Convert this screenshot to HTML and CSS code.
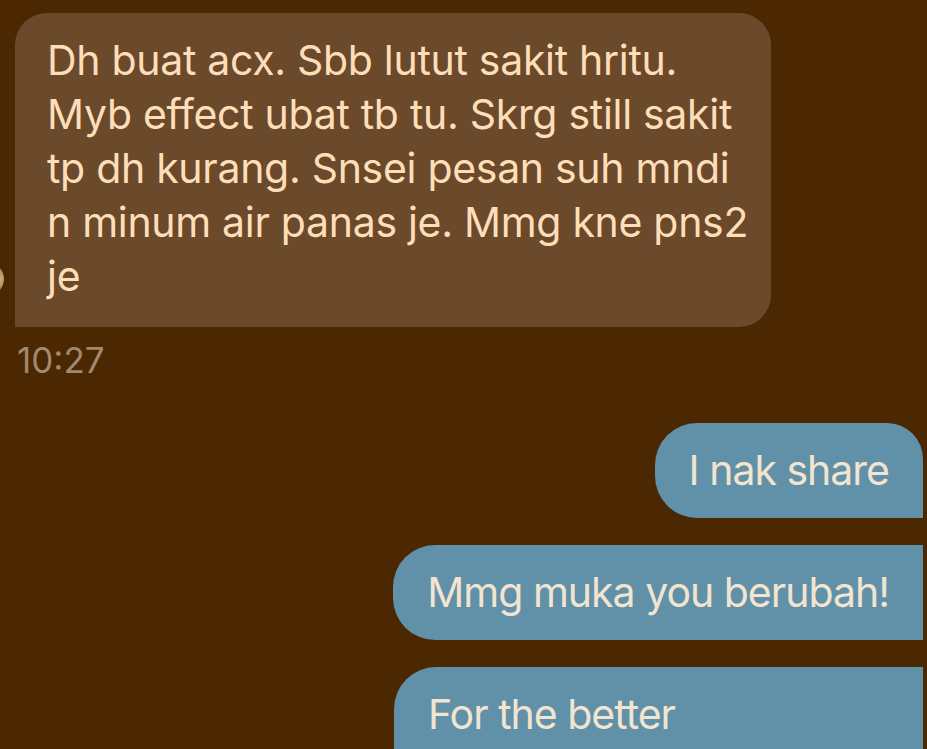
FILE: index.html
```html
<!DOCTYPE html>
<html>
<head>
<meta charset="utf-8">
<link rel="stylesheet" href="styles.css">
</head>
<body>
<div class="chat">
  <div class="group received">
    <div class="row">
      <div class="avatar"></div>
      <div class="bubble in">Dh buat acx. Sbb lutut sakit hritu. Myb effect ubat tb tu. Skrg still sakit tp dh kurang. Snsei pesan suh mndi n minum air panas je. Mmg kne pns2 je</div>
    </div>
    <div class="time">10:27</div>
  </div>
  <div class="group sent">
    <div class="bubble out first">I nak share</div>
    <div class="bubble out middle">Mmg muka you berubah!</div>
    <div class="bubble out last">For the better</div>
  </div>
</div>
</body>
</html>
```
FILE: styles.css
```css
html, body {
  margin: 0;
  padding: 0;
  background: #4b2702;
  overflow: hidden;
}
body {
  width: 927px;
  height: 749px;
  font-family: "Inter", "Noto Sans", sans-serif;
}
.chat {
  display: flex;
  flex-direction: column;
  padding: 13px 4px 0 15px;
}
.group.received {
  display: flex;
  flex-direction: column;
  align-items: flex-start;
}
.row {
  display: flex;
  align-items: flex-end;
  gap: 11px;
  margin-left: -45px;
}
.avatar {
  width: 34px;
  height: 34px;
  border-radius: 50%;
  flex: none;
  margin-bottom: 31px;
  background: radial-gradient(circle at 80% 50%, #d9c28a 0, #a8884e 30%, #5a3a12 70%);
}
.bubble {
  font-size: 41px;
  line-height: 54px;
  letter-spacing: -0.3px;
}
.bubble.in {
  width: 706px;
  background: #6b4a2c;
  color: #fddeb9;
  padding: 20px 18px 24px 32px;
  border-radius: 32px 32px 32px 0;
}
.time {
  margin-top: 13px;
  margin-left: 2px;
  font-size: 35px;
  line-height: 40px;
  color: #a08970;
}
.group.sent {
  display: flex;
  flex-direction: column;
  align-items: flex-end;
  gap: 27px;
  margin-top: 43px;
}
.bubble.out {
  background: #6091a8;
  color: #f2e4ce;
  letter-spacing: -1px;
  padding: 20px 34px 21px 34px;
}
.bubble.first { border-radius: 42px 36px 0 42px; }
.bubble.middle { border-radius: 42px 0 0 42px; }
.bubble.last {
  width: 461px;
  height: 49px;
  border-radius: 42px 0 0 0;
}
```
